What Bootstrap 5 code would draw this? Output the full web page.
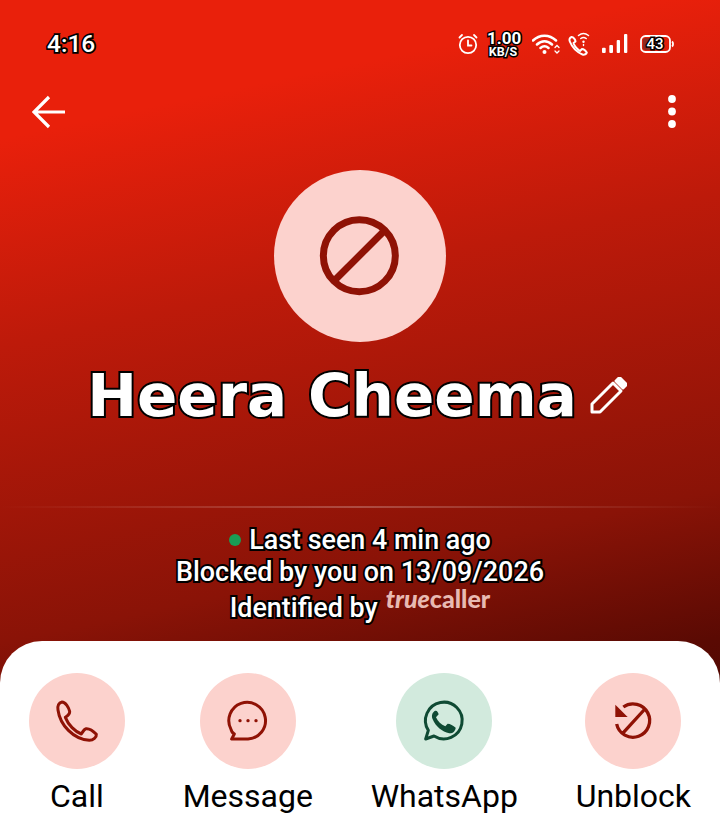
<!DOCTYPE html>
<html lang="en">
<head>
<meta charset="utf-8">
<title>Heera Cheema</title>
<link href="https://cdn.jsdelivr.net/npm/bootstrap@5.3.0/dist/css/bootstrap.min.css" rel="stylesheet">
<style>
html,body{margin:0;background:#fff}
.screen{width:720px;height:836px;overflow:hidden;font-family:Roboto,"Liberation Sans",sans-serif;background:linear-gradient(168deg,#e9200b 0%,#e9200b 14%,#bd1a0a 35%,#8a1307 65%,#5a0a03 80%,#3a0600 100%)}
.outlined{color:#fff;-webkit-text-stroke:4px #000;paint-order:stroke fill}
.statusbar{height:88px;padding:0 46px 0 47px}
.clock{font-size:24.500px;font-weight:500;-webkit-text-stroke-width:3.500px;line-height:1}
.speed{width:32px;margin:0 13px 0 8px;line-height:1;font-weight:700;-webkit-text-stroke-width:3px}
.speed-top{font-size:17px;line-height:15px}
.speed-sub{font-size:12.500px;line-height:11px}
.batt{width:34px;height:18px;margin-left:12px}
.batt-text{font-size:15px;font-weight:500;-webkit-text-stroke-width:3px;line-height:1}
.toolbar{height:48px;padding:0 44px 0 32px}
.avatar-disc{width:172px;height:172px;margin-top:34px;background:#fcd2cd}
.block-svg{filter:blur(.5px)}
.person{height:74px;margin-top:17px;padding-right:6px;font-family:"DejaVu Sans",Inter,sans-serif;font-size:59.500px;font-weight:700;line-height:74px;-webkit-text-stroke-width:6px}
.pencil{margin-left:13px;margin-top:-2px}
.rule{height:2px;margin-top:73px;background:linear-gradient(90deg,rgba(255,255,255,0),rgba(255,255,255,.24) 50%,rgba(255,255,255,0))}
.facts{margin-top:16px;font-size:26.900px;font-weight:500;line-height:32px;-webkit-text-stroke-width:3.500px}
.online-dot{width:12px;height:12px;background:#1a9c55;margin-right:8px}
.facts-last{line-height:39px;padding-top:1px}
.tc{font-family:Lato,"Liberation Sans",sans-serif;font-size:25px;font-weight:900;line-height:1;color:#e8bab2;-webkit-text-stroke:0;margin-left:8px;position:relative;top:-10px}
.tc-i{font-style:italic}
.sheet{height:195px;background:#fff;border-radius:42px 42px 0 0;padding-top:32px}
.act{color:#000;font-size:32px;line-height:36px}
.act-disc{width:96px;height:96px;margin-bottom:9px;background:#fcd2cd}
.act-green{background:#d2eadd}
</style>
</head>
<body>
<div class="screen d-flex flex-column">

  <div class="statusbar d-flex align-items-center justify-content-between">
    <span class="clock outlined">4:16</span>
    <div class="d-flex align-items-center">
      <svg width="22" height="22" viewBox="0 0 22 22" fill="none" stroke="#fff" stroke-width="1.8" stroke-linecap="round"><circle cx="11" cy="12" r="8.200"/><path d="M11 7.500V12.500H14.500M2.500 4.500L5 2M19.500 4.500L17 2"/></svg>
      <div class="speed outlined text-center">
        <div class="speed-top">1.00</div>
        <div class="speed-sub">KB/S</div>
      </div>
      <svg width="28" height="22" viewBox="0 0 28 22" fill="none" stroke="#fff" stroke-width="2.500" stroke-linecap="round"><path d="M1 7.500C7.500 1 17.500 1 24 7.500M5 11.500C9.500 7 15.500 7 20 11.500M8.500 15C11 12.800 14 12.800 16.500 15"/><circle cx="12.500" cy="19" r="2" fill="#fff" stroke="none"/><path d="M23 14.500l2-2 2 2M23 18l2 2 2-2" stroke-width="1.300"/></svg>
      <svg class="ms-2" width="22" height="24" viewBox="0 0 22 24" fill="none" stroke="#fff" stroke-width="2" stroke-linecap="round" stroke-linejoin="round"><path d="M3.500 5C1.500 5.800 1 7.500 1.800 9.500 4 15 8.500 20 14.500 22.500 16.500 23 18.500 22 18.800 20.500 17.500 18.500 15.500 17 14 17L12 19C9 17 6.500 14 5.500 11L7.500 9.500C7.500 8 5.500 4.800 3.500 5Z"/><path d="M10.500 3.500C13.500 1 17.500 1 20.500 3.500M12.800 6.500C14.500 5.200 16.500 5.200 18.200 6.500" stroke-width="1.500"/><circle cx="15.500" cy="9.800" r="1.200" fill="#fff" stroke="none"/><path d="M15.500 12.500v1" stroke-width="1.400"/></svg>
      <svg class="ms-2" width="30" height="20" viewBox="0 0 30 20" fill="#fff"><rect x="4" y="13.700" width="3.700" height="5.300" rx="1"/><rect x="11.300" y="11" width="3.700" height="8" rx="1"/><rect x="18.700" y="6" width="3.300" height="13" rx="1"/><rect x="26" y="0" width="3.300" height="19" rx="1"/></svg>
      <div class="batt position-relative d-flex align-items-center justify-content-center">
        <svg class="position-absolute top-0 start-0" width="34" height="18" viewBox="0 0 34 18" fill="none"><rect x="1" y="1" width="29" height="16" rx="4.500" stroke="#fff" stroke-width="1.800"/><rect x="3" y="3" width="14" height="12" rx="2.500" fill="#8f2a20"/><path d="M32 6.500c1.400 1 1.400 4 0 5" stroke="#fff" stroke-width="1.800"/></svg>
        <span class="batt-text outlined position-relative pe-1">43</span>
      </div>
    </div>
  </div>

  <div class="toolbar d-flex align-items-center justify-content-between">
    <svg width="34" height="34" viewBox="0 0 34 34" fill="none" stroke="#fff" stroke-width="3.200"><path d="M33 17H2.500M17 2L2 17 17 32"/></svg>
    <svg width="8" height="34" viewBox="0 0 8 34" fill="#fff"><circle cx="4" cy="4" r="3.900"/><circle cx="4" cy="16.500" r="3.900"/><circle cx="4" cy="29" r="3.900"/></svg>
  </div>

  <div class="avatar-disc rounded-circle align-self-center d-flex">
    <svg class="block-svg" width="172" height="172" viewBox="42 30 516 516" fill="none" stroke="#8f1205" stroke-width="21"><circle cx="298" cy="287" r="108"/><path d="M225 360L373 212"/></svg>
  </div>

  <div class="person d-flex align-items-center justify-content-center">
    <span class="outlined">Heera Cheema</span>
    <svg class="pencil" width="37" height="37" viewBox="0 0 37 37" fill="none" stroke="#fff" stroke-width="3" stroke-linejoin="round"><path d="M2 35V27L23 6 31 14 10 35Z"/><path d="M26 4L28.500 1.500C29 1 30 1 30.500 1.500L35.500 6.500C36 7 36 8 35.500 8.500L33 11Z" fill="#fff"/></svg>
  </div>

  <div class="rule"></div>

  <div class="facts text-center">
    <div class="d-flex align-items-center justify-content-center"><span class="online-dot rounded-circle"></span><span class="outlined">Last seen 4 min ago</span></div>
    <div class="outlined">Blocked by you on 13/09/2026</div>
    <div class="facts-last d-flex align-items-center justify-content-center"><span class="outlined">Identified by</span><span class="tc"><span class="tc-i">true</span>caller</span></div>
  </div>

  <div class="sheet mt-auto d-flex justify-content-around">
    <div class="act d-flex flex-column align-items-center">
      <div class="act-disc rounded-circle">
        <svg width="96" height="96" viewBox="87 129 288 288" fill="none" stroke="#8f1205" stroke-width="9" stroke-linejoin="round"><path d="M186 216C176 218 172 228 174 240 180 285 220 328 268 331 280 331 290 322 289 313 280 303 268 295 258 296 252 297 248 306 244 312 225 305 205 285 196 262 202 258 210 253 209 244 206 232 196 216 186 216Z"/></svg>
      </div>
      <span>Call</span>
    </div>
    <div class="act d-flex flex-column align-items-center">
      <div class="act-disc rounded-circle">
        <svg width="96" height="96" viewBox="600 129 288 288" fill="none" stroke="#8f1205" stroke-width="9" stroke-linejoin="round"><path d="M695 327H744A55 55 0 1 0 693 298C695 305 698 310 703 312Z"/><circle cx="720" cy="272" r="5" fill="#8f1205" stroke="none"/><circle cx="744" cy="272" r="5" fill="#8f1205" stroke="none"/><circle cx="768" cy="272" r="5" fill="#8f1205" stroke="none"/></svg>
      </div>
      <span>Message</span>
    </div>
    <div class="act d-flex flex-column align-items-center">
      <div class="act-disc act-green rounded-circle">
        <svg width="96" height="96" viewBox="108 129 288 288" fill="none" stroke="#0f4a33" stroke-width="9" stroke-linejoin="round"><path d="M197 327L205 301A55 55 0 1 1 222 318Z"/><path d="M226 242C217 246 213 257 218 268 228 291 246 305 268 310 278 311 287 302 287 293 280 287 270 281 263 281L256 289C243 284 234 275 228 262L236 253C234 247 232 241 226 242Z" fill="#0f4a33" stroke="none"/></svg>
      </div>
      <span>WhatsApp</span>
    </div>
    <div class="act d-flex flex-column align-items-center">
      <div class="act-disc rounded-circle">
        <svg width="96" height="96" viewBox="675 129 288 288" fill="none" stroke="#8f1205" stroke-width="10"><path d="M790 231A50 50 0 1 1 770 282M788 310L852 240"/><path d="M766 224V261H803Z" fill="#8f1205" stroke="none"/></svg>
      </div>
      <span>Unblock</span>
    </div>
  </div>
</div>
<script src="https://cdn.jsdelivr.net/npm/bootstrap@5.3.0/dist/js/bootstrap.bundle.min.js"></script>
</body>
</html>
